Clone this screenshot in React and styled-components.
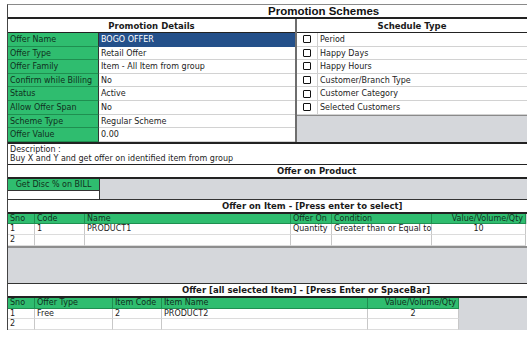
import React from "react";
import styled, { createGlobalStyle } from "styled-components";

const GREEN = "#2fbd6f";
const GREEN_LINE = "#1f8f50";
const GRAY = "#d5d7db";
const DARK = "#222";

const GlobalStyle = createGlobalStyle`
  html, body {
    margin: 0;
    padding: 0;
    background: #fff;
    overflow: hidden;
  }
  body {
    font-family: "DejaVu Sans", Verdana, sans-serif;
    font-size: 8px;
    color: #1c1c1c;
  }
`;

const details = [
  ["Offer Name", "BOGO OFFER"],
  ["Offer Type", "Retail Offer"],
  ["Offer Family", "Item - All Item from group"],
  ["Confirm while Billing", "No"],
  ["Status", "Active"],
  ["Allow Offer Span", "No"],
  ["Scheme Type", "Regular Scheme"],
  ["Offer Value", "0.00"],
];

const schedules = [
  "Period",
  "Happy Days",
  "Happy Hours",
  "Customer/Branch Type",
  "Customer Category",
  "Selected Customers",
];

const itemCols = [
  { label: "Sno", w: "27px" },
  { label: "Code", w: "50px" },
  { label: "Name", w: "206px" },
  { label: "Offer On", w: "41px" },
  { label: "Condition", w: "100px" },
  { label: "Value/Volume/Qty", w: "94px", align: "right" },
];

const itemRows = [
  ["1", "1", "PRODUCT1", "Quantity", "Greater than or Equal to", "10"],
  ["2", "", "", "", "", ""],
];

const freeCols = [
  { label: "Sno", w: "27px" },
  { label: "Offer Type", w: "78px" },
  { label: "Item Code", w: "49px" },
  { label: "Item Name", w: "206px" },
  { label: "Value/Volume/Qty", w: "91px", align: "right" },
];

const freeRows = [
  ["1", "Free", "2", "PRODUCT2", "2"],
  ["2", "", "", "", ""],
];

const App = () => {
  return (
    <>
      <GlobalStyle />
      <Sheet>
        <Title>Promotion Schemes</Title>

        <TopSplit>
          <Panel>
            <PanelHead>Promotion Details</PanelHead>
            <DetailGrid>
              {details.map(([label, value], i) => (
                <React.Fragment key={label}>
                  <Label>{label}</Label>
                  <Value $selected={i === 0}>{value}</Value>
                </React.Fragment>
              ))}
            </DetailGrid>
          </Panel>
          <Panel $right>
            <PanelHead>Schedule Type</PanelHead>
            {schedules.map((s) => (
              <CheckRow key={s}>
                <CheckCell>
                  <Box />
                </CheckCell>
                <CheckText>{s}</CheckText>
              </CheckRow>
            ))}
            <GrayFill />
          </Panel>
        </TopSplit>

        <Description>
          <div>Description :</div>
          <div>Buy X and Y and get offer on identified item from group</div>
        </Description>

        <SectionHead $indent={269}>Offer on Product</SectionHead>
        <BillRow>
          <BillLeft>
            <BillLabel>Get Disc % on BILL</BillLabel>
            <BillBlank />
          </BillLeft>
          <GrayFill />
        </BillRow>

        <SectionHead $indent={214} $top>
          Offer on Item - [Press enter to select]
        </SectionHead>
        <DataTable $cols={itemCols.map((c) => c.w).join(" ") + " 1fr"}>
          {itemCols.map((c) => (
            <HeadCell key={c.label} $align={c.align}>
              {c.label}
            </HeadCell>
          ))}
          <Spacer $header />
          {itemRows.map((row, r) =>
            row
              .map((v, i) => (
                <Cell key={r + "-" + i} $align={i === 5 ? "center" : null}>
                  {v}
                </Cell>
              ))
              .concat(<Spacer key={r + "-s"} />)
          )}
        </DataTable>
        <GrayBlock />

        <SectionHead $indent={174} $top>
          Offer [all selected Item] - [Press Enter or SpaceBar]
        </SectionHead>
        <DataTable $cols={freeCols.map((c) => c.w).join(" ") + " 1fr"}>
          {freeCols.map((c) => (
            <HeadCell key={c.label} $align={c.align}>
              {c.label}
            </HeadCell>
          ))}
          <SideGray />
          {freeRows.map((row, r) =>
            row.map((v, i) => (
              <Cell key={r + "-" + i} $align={i === 4 ? "center" : null}>
                {v}
              </Cell>
            ))
          )}
        </DataTable>
      </Sheet>
    </>
  );
};

export default App;

const Sheet = styled.div`
  margin: 4px 0 0 7px;
  width: 520px;
  border-top: 1px solid #8a8a8a;
  border-left: 1px solid #444;
  box-sizing: border-box;
`;

const Title = styled.div`
  height: 12px;
  line-height: 13px;
  padding-left: 260px;
  font-family: "Liberation Sans", Arial, sans-serif;
  font-weight: bold;
  font-size: 11.5px;
  color: #111;
  border-bottom: 2px solid ${DARK};
`;

const TopSplit = styled.div`
  display: grid;
  grid-template-columns: 287px 1fr;
  border-bottom: 2px solid ${DARK};
`;

const Panel = styled.div`
  display: flex;
  flex-direction: column;
  border-left: ${(p) => (p.$right ? "2px solid #6e6e6e" : "none")};
`;

const PanelHead = styled.div`
  height: 13px;
  line-height: 14px;
  text-align: center;
  font-weight: bold;
  font-size: 8.5px;
  color: #1a1a1a;
  border-bottom: 1px solid ${DARK};
`;

const DetailGrid = styled.div`
  display: grid;
  grid-template-columns: 91px 1fr;
  grid-auto-rows: 13.6px;
`;

const Label = styled.div`
  background: ${GREEN};
  color: #10301d;
  padding-left: 2px;
  line-height: 13px;
  border-bottom: 1px solid ${GREEN_LINE};
  border-right: 1px solid #333;
  box-sizing: border-box;
  white-space: nowrap;
`;

const Value = styled.div`
  background: ${(p) => (p.$selected ? "#24508a" : "#fff")};
  color: ${(p) => (p.$selected ? "#fff" : "#1c1c1c")};
  padding-left: 2px;
  line-height: 13px;
  border-bottom: 1px solid ${(p) => (p.$selected ? "#24508a" : "#d2d2d2")};
  box-sizing: border-box;
  white-space: nowrap;
`;

const CheckRow = styled.div`
  display: flex;
  height: 13.6px;
  border-bottom: 1px solid #d2d2d2;
  box-sizing: border-box;
`;

const CheckCell = styled.div`
  width: 20px;
  display: flex;
  align-items: center;
  justify-content: center;
  border-right: 1px solid #cfcfcf;
`;

const Box = styled.span`
  width: 6px;
  height: 6px;
  border: 1.6px solid #111;
  border-radius: 1px;
  background: #fff;
`;

const CheckText = styled.div`
  padding-left: 2px;
  line-height: 13px;
  color: #222;
`;

const GrayFill = styled.div`
  flex: 1;
  background: ${GRAY};
  border-top: 1px solid #8a8a8a;
`;

const Description = styled.div`
  height: 19px;
  padding: 1px 0 0 2px;
  line-height: 9.5px;
  color: #1c1c1c;
  border-bottom: 1px solid ${DARK};
`;

const SectionHead = styled.div`
  height: 12px;
  line-height: 13px;
  padding-left: ${(p) => p.$indent}px;
  font-weight: bold;
  font-size: 8.5px;
  color: #1a1a1a;
  white-space: nowrap;
  border-top: ${(p) => (p.$top ? "1px solid #333" : "none")};
  border-bottom: 2px solid ${DARK};
`;

const BillRow = styled.div`
  display: flex;
  height: 20px;
  ${GrayFill} {
    border-top: none;
  }
`;

const BillLeft = styled.div`
  width: 91px;
  display: flex;
  flex-direction: column;
  border-right: 1px solid #333;
`;

const BillLabel = styled.div`
  height: 11px;
  line-height: 11px;
  text-align: center;
  background: ${GREEN};
  color: #10301d;
  border-bottom: 1px solid #333;
`;

const BillBlank = styled.div`
  flex: 1;
  background: #fff;
`;

const DataTable = styled.div`
  display: grid;
  grid-template-columns: ${(p) => p.$cols};
  grid-auto-rows: 10.7px;
`;

const HeadCell = styled.div`
  background: ${GREEN};
  color: #10301d;
  padding: 0 2px;
  line-height: 10px;
  text-align: ${(p) => p.$align || "left"};
  border-right: 1px solid ${GREEN_LINE};
  border-bottom: 1px solid ${GREEN_LINE};
  box-sizing: border-box;
  white-space: nowrap;
`;

const Cell = styled.div`
  background: #fff;
  padding: 0 2px;
  line-height: 10.5px;
  text-align: ${(p) => p.$align || "left"};
  border-right: 1px solid #c8c8c8;
  border-bottom: 1px solid #dcdcdc;
  box-sizing: border-box;
  white-space: nowrap;
`;

const Spacer = styled.div`
  background: ${(p) => (p.$header ? GRAY : "#fff")};
`;

const SideGray = styled.div`
  grid-row: 1 / span 3;
  grid-column: 6;
  background: ${GRAY};
`;

const GrayBlock = styled.div`
  height: 35px;
  background: ${GRAY};
  border-top: 2px solid #8d8d8d;
`;
